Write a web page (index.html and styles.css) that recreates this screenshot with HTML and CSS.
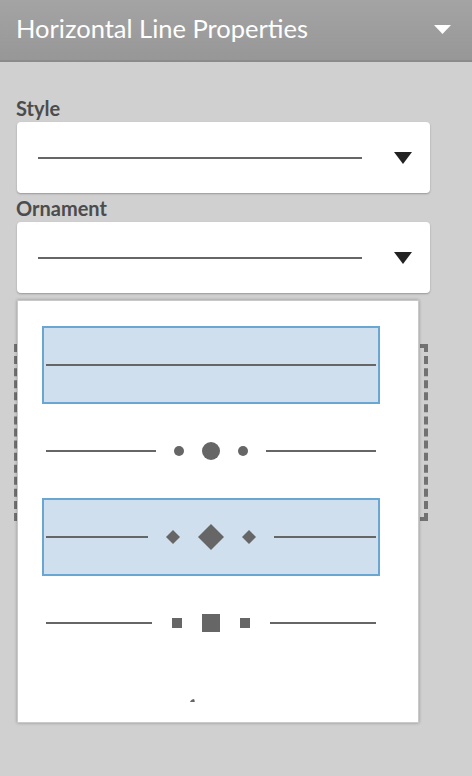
FILE: index.html
```html
<!DOCTYPE html>
<html>
<head>
<meta charset="utf-8">
<link rel="stylesheet" href="styles.css">
</head>
<body>
<div class="page">
  <header class="header">
    <h1 class="title">Horizontal Line Properties</h1>
    <svg class="header-caret" width="17" height="9" viewBox="0 0 17 9"><path d="M0 0H17L8.5 9Z" fill="#fff"/></svg>
  </header>
  <main class="content">
    <div class="field-label label-style">Style</div>
    <div class="select">
      <span class="select-line"></span>
      <svg class="select-caret" width="18" height="12" viewBox="0 0 18 12"><path d="M0 0H18L9 12Z" fill="#222"/></svg>
    </div>
    <div class="field-label label-ornament">Ornament</div>
    <div class="select">
      <span class="select-line"></span>
      <svg class="select-caret" width="18" height="12" viewBox="0 0 18 12"><path d="M0 0H18L9 12Z" fill="#222"/></svg>
    </div>
    <div class="preview"></div>
  </main>

  <div class="menu">
    <div class="menu-list">
      <div class="option selected">
        <svg width="330" height="74" viewBox="0 0 330 74"><rect x="0" y="36" width="330" height="2" fill="#666"/></svg>
      </div>
      <div class="option">
        <svg width="330" height="74" viewBox="0 0 330 74" fill="#666">
          <rect x="0" y="36" width="110" height="2"/>
          <circle cx="133" cy="37" r="5"/>
          <circle cx="165" cy="37" r="9"/>
          <circle cx="197" cy="37" r="5"/>
          <rect x="220" y="36" width="110" height="2"/>
        </svg>
      </div>
      <div class="option selected">
        <svg width="330" height="74" viewBox="0 0 330 74" fill="#666">
          <rect x="0" y="36" width="102" height="2"/>
          <path d="M127 30L134 37L127 44L120 37Z"/>
          <path d="M165 24L178 37L165 50L152 37Z"/>
          <path d="M203 30L210 37L203 44L196 37Z"/>
          <rect x="228" y="36" width="102" height="2"/>
        </svg>
      </div>
      <div class="option">
        <svg width="330" height="74" viewBox="0 0 330 74" fill="#666">
          <rect x="0" y="36" width="106" height="2"/>
          <rect x="126" y="32" width="10" height="10"/>
          <rect x="156" y="28" width="18" height="18"/>
          <rect x="194" y="32" width="10" height="10"/>
          <rect x="224" y="36" width="106" height="2"/>
        </svg>
      </div>
      <div class="option">
        <svg width="330" height="74" viewBox="0 0 330 74" fill="#666">
          <path d="M143 32C144 29 146 27 148 27C149 29 149 31 148 33Z"/>
          <ellipse cx="162" cy="33" rx="5" ry="3"/>
        </svg>
      </div>
    </div>
  </div>
</div>
</body>
</html>
```

FILE: styles.css
```css
* { box-sizing: border-box; }

html, body {
  margin: 0;
  padding: 0;
}

body {
  background: #d0d0d0;
  font-family: Lato, "Open Sans", "Liberation Sans", sans-serif;
}

.page {
  position: relative;
  width: 472px;
  height: 776px;
  overflow: hidden;
  background: #d0d0d0;
}

.header {
  height: 62px;
  display: flex;
  align-items: center;
  justify-content: space-between;
  padding: 0 21px 0 16px;
  background: linear-gradient(#a4a4a4, #979797);
  border-bottom: 2px solid #8b8b8b;
}

.title {
  margin: 0;
  font-weight: 400;
  font-size: 25.5px;
  line-height: 28px;
  color: #fff;
  padding-bottom: 5px;
}

.header-caret {
  display: block;
  margin-top: -2px;
}

.content {
  padding: 35px 42px 0 17px;
}

.field-label {
  font-weight: 700;
  font-size: 20px;
  line-height: 22px;
  color: #4c4c4c;
  margin-left: -1px;
}

.label-style { margin-bottom: 3px; }

.label-ornament {
  margin-top: 4px;
  margin-bottom: 3px;
}

.select {
  height: 71px;
  background: #fff;
  border-radius: 4px;
  box-shadow: 0 1px 2px rgba(0, 0, 0, 0.28);
  display: flex;
  align-items: center;
  padding: 0 18px 0 21px;
  gap: 32px;
}

.select-line {
  flex: 0 0 324px;
  height: 2px;
  background: #666;
  margin-top: 1px;
}

.select-caret {
  display: block;
  margin-top: 1px;
}

.preview {
  margin: 51px 0 0 -3px;
  width: 414px;
  height: 177px;
  border: 4px dashed #727272;
}

.menu {
  position: absolute;
  left: 17px;
  top: 300px;
  width: 402px;
  height: 423px;
  background: #fff;
  border: 1px solid #c9c9c9;
  box-shadow: 0 0 3px rgba(0, 0, 0, 0.3);
}

.menu-list {
  height: 401px;
  overflow: hidden;
  padding: 25px 38px 0 24px;
  display: flex;
  flex-direction: column;
  gap: 8px;
}

.option {
  flex: 0 0 78px;
  width: 338px;
  border: 2px solid transparent;
  padding: 0 2px;
}

.option svg { display: block; }

.option.selected {
  background: #cfdfee;
  border-color: #6aa6d2;
}
```
